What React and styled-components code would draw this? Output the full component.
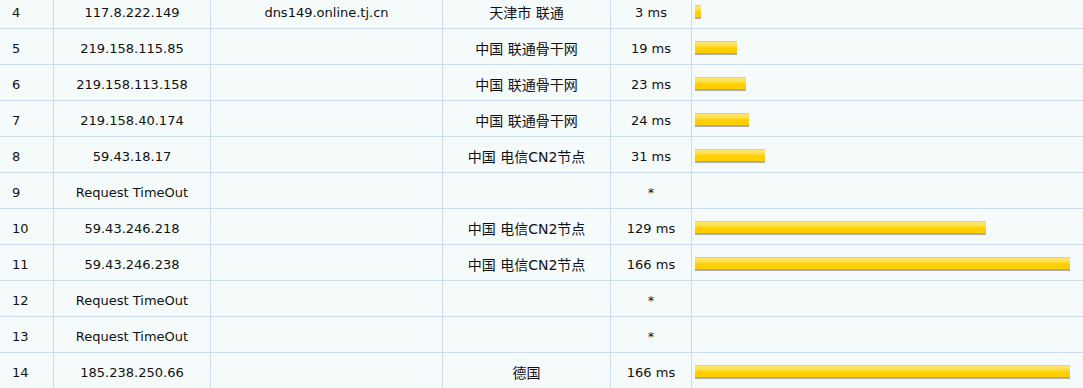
import React from "react";
import styled, { createGlobalStyle } from "styled-components";

const GlobalStyle = createGlobalStyle`
  html, body {
    margin: 0;
    padding: 0;
    background: #f5fafb;
    overflow: hidden;
  }
`;

const Grid = styled.div`
  display: grid;
  grid-template-columns: 53px 156px 231px 167px 80px 1fr;
  grid-auto-rows: 35px;
  gap: 1px;
  background: #cddbef;
  margin-top: -7px;
  width: 1083px;
  font-family: "DejaVu Sans", "Noto Sans CJK SC", sans-serif;
  font-size: 13px;
  color: #111;
`;

const Cell = styled.div`
  background: #f5fafb;
  display: flex;
  align-items: center;
  justify-content: ${(p) => (p.$left ? "flex-start" : "center")};
  padding: 4px 0 0 ${(p) => (p.$left ? "12px" : "0")};
  font-size: ${(p) => (p.$cjk ? "14px" : "inherit")};
  line-height: 16px;
  white-space: nowrap;
`;

const BarCell = styled.div`
  background: #f5fafb;
  padding: 12px 0 0 3px;
`;

const Bar = styled.div`
  height: 12px;
  background: linear-gradient(#f7c600 0, #ffe46a 1px, #ffe257 4px, #ffd000 7px, #ffcc00 12px);
  border-bottom: 2px solid #ababab;
`;

const hops = [
  { n: 4, ip: "117.8.222.149", host: "dns149.online.tj.cn", loc: "天津市 联通", ms: 3 },
  { n: 5, ip: "219.158.115.85", host: "", loc: "中国 联通骨干网", ms: 19 },
  { n: 6, ip: "219.158.113.158", host: "", loc: "中国 联通骨干网", ms: 23 },
  { n: 7, ip: "219.158.40.174", host: "", loc: "中国 联通骨干网", ms: 24 },
  { n: 8, ip: "59.43.18.17", host: "", loc: "中国 电信CN2节点", ms: 31 },
  { n: 9, ip: "Request TimeOut", host: "", loc: "", ms: null },
  { n: 10, ip: "59.43.246.218", host: "", loc: "中国 电信CN2节点", ms: 129 },
  { n: 11, ip: "59.43.246.238", host: "", loc: "中国 电信CN2节点", ms: 166 },
  { n: 12, ip: "Request TimeOut", host: "", loc: "", ms: null },
  { n: 13, ip: "Request TimeOut", host: "", loc: "", ms: null },
  { n: 14, ip: "185.238.250.66", host: "", loc: "德国", ms: 166 },
];

const MAX_MS = 166;
const MAX_BAR = 375;

export default function App() {
  return (
    <>
      <GlobalStyle />
      <Grid>
        {hops.map((h) => (
          <React.Fragment key={h.n}>
            <Cell $left>{h.n}</Cell>
            <Cell>{h.ip}</Cell>
            <Cell>{h.host}</Cell>
            <Cell $cjk>{h.loc}</Cell>
            <Cell>{h.ms === null ? "*" : `${h.ms} ms`}</Cell>
            <BarCell>
              {h.ms !== null && (
                <Bar style={{ width: Math.floor((h.ms / MAX_MS) * MAX_BAR) }} />
              )}
            </BarCell>
          </React.Fragment>
        ))}
      </Grid>
    </>
  );
}
